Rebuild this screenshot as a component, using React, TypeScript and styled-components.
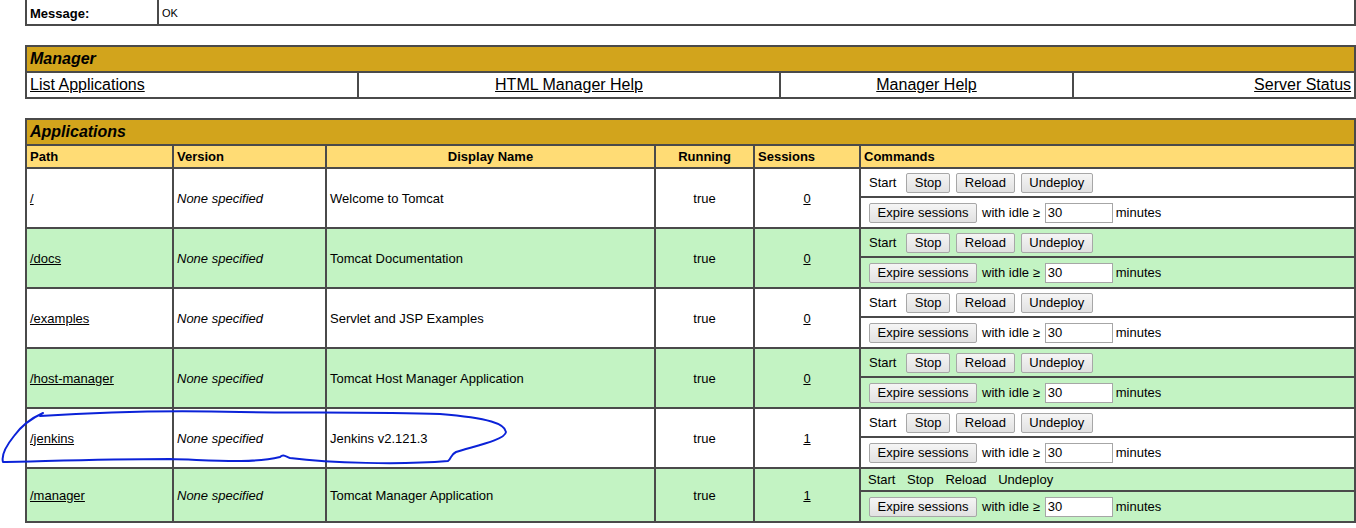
import React from "react";
import styled, { createGlobalStyle } from "styled-components";

const GlobalStyle = createGlobalStyle`
  html, body { margin: 0; padding: 0; background: #ffffff; overflow: hidden; }
  body { font-family: "Liberation Sans", Arial, sans-serif; color: #000; }
`;

const Page = styled.div`
  position: relative;
  width: 1356px;
  height: 528px;
  padding-left: 25px;
  box-sizing: border-box;
  overflow: hidden;
`;

const Table = styled.table<{ $gap?: number }>`
  width: 1331px;
  border-collapse: separate;
  border-spacing: 0;
  border: 1px solid #4a4a4a;
  table-layout: fixed;
  margin-top: ${(p) => (p.$gap ?? 0)}px;
`;

const Col = styled.col<{ $w: number }>`
  width: ${(p) => p.$w}px;
`;

const Cell = styled.td<{ $align?: "left" | "center" | "right"; $bg?: string; $size?: number }>`
  border: 1px solid #4a4a4a;
  padding: 3px;
  text-align: ${(p) => p.$align ?? "left"};
  vertical-align: middle;
  background: ${(p) => p.$bg ?? "#ffffff"};
  font-size: ${(p) => p.$size ?? 13}px;
  line-height: ${(p) => Math.round((p.$size ?? 13) * 1.15)}px;
  white-space: nowrap;
  overflow: hidden;
`;

const MessageCell = styled(Cell)`
  padding-top: 5px;
`;

const TitleCell = styled.td`
  border: 1px solid #4a4a4a;
  padding: 3px;
  background: #d2a41c;
  font-size: 16px;
  line-height: 18px;
  font-weight: bold;
  font-style: italic;
  text-align: left;
`;

const HeaderCell = styled.td<{ $align?: "left" | "center" }>`
  border: 1px solid #4a4a4a;
  padding: 3px;
  background: #ffdc75;
  font-size: 13px;
  line-height: 15px;
  font-weight: bold;
  text-align: ${(p) => p.$align ?? "left"};
`;

const Link = styled.a`
  color: #000;
  text-decoration: underline;
`;

const Label = styled.strong`
  font-weight: bold;
`;

const Small = styled.span`
  font-size: 11px;
`;

const CommandLine = styled.div<{ $h: number; $gap: number }>`
  display: flex;
  align-items: center;
  height: ${(p) => p.$h}px;
  gap: ${(p) => p.$gap}px;
  padding-left: 4px;
  font-size: 13px;
  white-space: nowrap;
`;

const Word = styled.span<{ $ml?: number; $mr?: number }>`
  margin-left: ${(p) => p.$ml ?? 0}px;
  margin-right: ${(p) => p.$mr ?? 0}px;
`;

const Button = styled.button<{ $ml?: number }>`
  height: 20px;
  padding: 0 7.5px;
  margin-left: ${(p) => p.$ml ?? 0}px;
  font-family: "Liberation Sans", Arial, sans-serif;
  font-size: 13px;
  color: #000;
  background: linear-gradient(#f5f5f5, #e1e1e1);
  border: 1px solid #a7a7a7;
  border-radius: 2px;
  box-sizing: border-box;
`;

const IdleInput = styled.input`
  width: 68px;
  height: 20px;
  box-sizing: border-box;
  border: 1px solid #a6a6a6;
  padding: 0 2px;
  margin-left: 5px;
  font-family: "Liberation Sans", Arial, sans-serif;
  font-size: 13px;
  color: #000;
  background: #fff;
`;

const Italic = styled.i`
  font-style: italic;
`;

const Annotation = styled.svg`
  position: absolute;
  left: 0;
  top: 0;
  pointer-events: none;
`;

type App = {
  path: string;
  name: string;
  sessions: string;
  bg: string;
  plain?: boolean;
};

const apps: App[] = [
  { path: "/", name: "Welcome to Tomcat", sessions: "0", bg: "#ffffff" },
  { path: "/docs", name: "Tomcat Documentation", sessions: "0", bg: "#c3f3c3" },
  { path: "/examples", name: "Servlet and JSP Examples", sessions: "0", bg: "#ffffff" },
  { path: "/host-manager", name: "Tomcat Host Manager Application", sessions: "0", bg: "#c3f3c3" },
  { path: "/jenkins", name: "Jenkins v2.121.3", sessions: "1", bg: "#ffffff" },
  { path: "/manager", name: "Tomcat Manager Application", sessions: "1", bg: "#c3f3c3", plain: true },
];

function AppRows({ app }: { app: App }) {
  return (
    <>
      <tr>
        <Cell rowSpan={2} $bg={app.bg}>
          <Link href="#">{app.path}</Link>
        </Cell>
        <Cell rowSpan={2} $bg={app.bg}>
          <Italic>None specified</Italic>
        </Cell>
        <Cell rowSpan={2} $bg={app.bg}>{app.name}</Cell>
        <Cell rowSpan={2} $bg={app.bg} $align="center">true</Cell>
        <Cell rowSpan={2} $bg={app.bg} $align="center">
          <Link href="#">{app.sessions}</Link>
        </Cell>
        <Cell $bg={app.bg}>
          {app.plain ? (
            <CommandLine $h={15} $gap={11.6}>
              <span>Start</span>
              <span>Stop</span>
              <span>Reload</span>
              <span>Undeploy</span>
            </CommandLine>
          ) : (
            <CommandLine $h={21} $gap={6.3}>
              <Word $ml={1} $mr={3.5}>Start</Word>
              <Button>Stop</Button>
              <Button>Reload</Button>
              <Button>Undeploy</Button>
            </CommandLine>
          )}
        </Cell>
      </tr>
      <tr>
        <Cell $bg={app.bg}>
          <CommandLine $h={23} $gap={0}>
            <Button $ml={1}>Expire sessions</Button>
            <Word $ml={5}>with idle&nbsp;≥</Word>
            <IdleInput defaultValue="30" />
            <Word $ml={3}>minutes</Word>
          </CommandLine>
        </Cell>
      </tr>
    </>
  );
}

export default function App() {
  return (
    <>
      <GlobalStyle />
      <Page>
        <Table $gap={-2}>
          <colgroup>
            <Col $w={132} />
            <Col $w={1197} />
          </colgroup>
          <tbody>
            <tr>
              <MessageCell>
                <Label>Message:</Label>
              </MessageCell>
              <MessageCell>
                <Small>OK</Small>
              </MessageCell>
            </tr>
          </tbody>
        </Table>

        <Table $gap={19}>
          <colgroup>
            <Col $w={332} />
            <Col $w={422} />
            <Col $w={293} />
            <Col $w={282} />
          </colgroup>
          <tbody>
            <tr>
              <TitleCell colSpan={4}>Manager</TitleCell>
            </tr>
            <tr>
              <Cell $size={16}>
                <Link href="#">List Applications</Link>
              </Cell>
              <Cell $size={16} $align="center">
                <Link href="#">HTML Manager Help</Link>
              </Cell>
              <Cell $size={16} $align="center">
                <Link href="#">Manager Help</Link>
              </Cell>
              <Cell $size={16} $align="right">
                <Link href="#">Server Status</Link>
              </Cell>
            </tr>
          </tbody>
        </Table>

        <Table $gap={19}>
          <colgroup>
            <Col $w={147} />
            <Col $w={153} />
            <Col $w={329} />
            <Col $w={99} />
            <Col $w={106} />
            <Col $w={495} />
          </colgroup>
          <tbody>
            <tr>
              <TitleCell colSpan={6}>Applications</TitleCell>
            </tr>
            <tr>
              <HeaderCell>Path</HeaderCell>
              <HeaderCell>Version</HeaderCell>
              <HeaderCell $align="center">Display Name</HeaderCell>
              <HeaderCell $align="center">Running</HeaderCell>
              <HeaderCell>Sessions</HeaderCell>
              <HeaderCell>Commands</HeaderCell>
            </tr>
            {apps.map((a) => (
              <AppRows key={a.path} app={a} />
            ))}
          </tbody>
        </Table>

        <Annotation width="1356" height="528" viewBox="0 0 1356 528">
          <path
            d="M43 413 C 34 417, 22 425, 14 436 C 6 446, 1 455, 3 462 C 30 462, 90 459, 170 459 C 210 460, 250 464, 280 457 C 283 454, 285 456, 290 458 C 330 463, 400 465, 448 461 C 452 458, 450 455, 456 452 C 475 446, 505 440, 506 432 C 505 424, 490 418, 440 414 C 380 412, 300 413, 240 412 C 170 410, 100 412, 40 416"
            fill="none"
            stroke="#0b22d8"
            strokeWidth="2"
            strokeLinecap="round"
            strokeLinejoin="round"
          />
        </Annotation>
      </Page>
    </>
  );
}
